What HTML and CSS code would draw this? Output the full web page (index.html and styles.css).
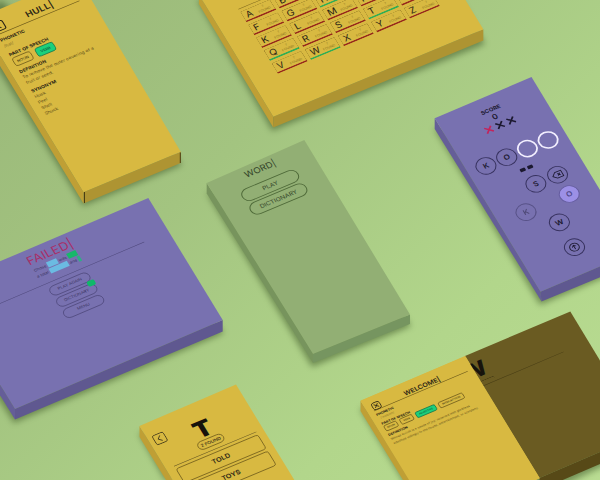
FILE: index.html
```html
<!DOCTYPE html>
<html lang="en">
<head>
<meta charset="utf-8">
<title>Word</title>
<link rel="stylesheet" href="styles.css">
</head>
<body>
<main class="board">
  <svg class="slabs" viewBox="0 0 600 480" aria-hidden="true">
    <g class="shadows">
      <path d="M-26 30 83 206 182 165 150 120 0 0Z"/>
      <path d="M197 0 272 131 485 44 460 0Z"/>
      <path d="M-10 386 14 423 224 333 190 290Z"/>
      <path d="M206 192 312 367 411 326 360 250Z"/>
      <path d="M434 128 540 305 640 262 540 150Z"/>
      <path d="M139 434 165 480 280 480 220 400Z"/>
      <path d="M360 409 405 484 545 494 620 458 560 360Z"/>
    </g>
    <g class="yellow">
      <path class="left" d="M-22.5 18.3V29L83.5 203.5V192.3Z"/>
      <path class="front" d="M83.5 192.3 180.7 151.7V163L83.5 203.5Z"/>
      <path class="top" d="M-22.5 18.3 74.7-22.3H78.5L180.7 151.7 83.5 192.3Z"/>
      <path class="seam" d="M84.5 192V203M180.3 152.5V163"/>
    </g>
    <g class="yellow">
      <path class="left" d="M198.9-5.4V4L273.3 127.5V116.7Z"/>
      <path class="front" d="M273.3 116.7 483.3 29.3V40.5L273.3 127.5Z"/>
      <path class="top" d="M198.9-5.4 409-92.8 483.3 29.3 273.3 116.7Z"/>
    </g>
    <g class="purple">
      <path class="left" d="M-60 287V298L15 419.5V409Z"/>
      <path class="front" d="M15 409 222.7 320V331.5L15 419.5Z"/>
      <path class="top" d="M-60 287 148.3 198 222.7 320 15 409Z"/>
    </g>
    <g class="green">
      <path class="left" d="M206.7 183V193.5L313 363V354Z"/>
      <path class="front" d="M313 354 410 314.5V324L313 363Z"/>
      <path class="top" d="M206.7 183 304.3 140 410 314.5 313 354Z"/>
    </g>
    <g class="purple">
      <path class="left" d="M434.7 118.3V129L541.5 301.5 540.5 291.7Z"/>
      <path class="front" d="M540.5 291.7 637 251V262L541.5 301.5Z"/>
      <path class="top" d="M434.7 118.3 531.5 77 637 251 540.5 291.7Z"/>
    </g>
    <g class="yellow">
      <path class="left" d="M139.5 426V437L246 610V600Z"/>
      <path class="top" d="M139.5 426 236 384.5 342 558 246 600Z"/>
    </g>
    <g class="yellow">
      <path class="left" d="M360.5 400.7V411L435.7 533V522Z"/>
      <path class="top" d="M360.5 400.7 465 356 540 478 435.7 522Z"/>
    </g>
    <g class="brown">
      <path class="front" d="M539.5 478 644 433V445L539.5 490Z"/>
      <path class="top" d="M465 356 570.3 311.5 644 433 539.5 478Z"/>
    </g>
  </svg>

  <section class="panel entry hull">
    <header class="bar">
      <svg class="key" viewBox="0 0 12 12"><rect x="1" y="1" width="10" height="10" rx="2"/><path d="M7.3 3.5 4.7 6l2.6 2.5"/></svg>
      <h1>HULL|</h1>
    </header>
    <h2>PHONETIC</h2>
    <p class="phonetic">/həl/</p>
    <h2>PART OF SPEECH</h2>
    <div class="tags"><span>NOUN</span><span class="on">VERB</span></div>
    <h2>DEFINITION</h2>
    <p>To remove the outer covering of a<br>fruit or seed.</p>
    <h2 class="syn">SYNONYM</h2>
    <p>Husk<br>Peel<br>Shell<br>Shuck</p>
  </section>

  <section class="panel wide letters">
    <div class="grid">
      <div class="cell">A<small>?<br>FOUND</small></div><div class="cell">B<small>?<br>FOUND</small></div><div class="cell"></div><div class="cell"></div><div class="cell"></div>
      <div class="cell">F<small>?<br>FOUND</small></div><div class="cell">G<small>?<br>FOUND</small></div><div class="cell got">H<small>?<br>FOUND</small></div><div class="cell"></div><div class="cell"></div>
      <div class="cell">K<small>?<br>FOUND</small></div><div class="cell">L<small>?<br>FOUND</small></div><div class="cell">M<small>?<br>FOUND</small></div><div class="cell">N<small>?<br>FOUND</small></div><div class="cell"></div>
      <div class="cell got">Q<small>?<br>FOUND</small></div><div class="cell">R<small>?<br>FOUND</small></div><div class="cell">S<small>?<br>FOUND</small></div><div class="cell got">T<small>?<br>FOUND</small></div><div class="cell">U<small>?<br>FOUND</small></div>
      <div class="cell">V<small>?<br>FOUND</small></div><div class="cell got">W<small>?<br>FOUND</small></div><div class="cell">X<small>?<br>FOUND</small></div><div class="cell">Y<small>?<br>FOUND</small></div><div class="cell">Z<small>?<br>FOUND</small></div>
    </div>
  </section>

  <section class="panel wide failed">
    <h1>FAILED|</h1>
    <p class="hint"><span>Chose</span><mark class="c1"></mark><span>was</span><mark class="g1"></mark></p>
    <p class="hint"><span>a total</span><mark class="c2"></mark><span>and</span><mark class="g2"></mark></p>
    <hr>
    <nav class="pills">
      <a>PLAY AGAIN</a>
      <a>DICTIONARY<i></i></a>
      <a>MENU</a>
    </nav>
  </section>

  <section class="panel home">
    <h1>WORD|</h1>
    <nav class="pills"><a>PLAY</a><a>DICTIONARY</a></nav>
  </section>

  <section class="panel game">
    <h2>SCORE</h2>
    <div class="score">0</div>
    <svg class="lives" viewBox="0 0 34 10"><path class="lost" d="M1.5 1.5l7 7m0-7l-7 7"/><path d="M13.5 1.5l7 7m0-7l-7 7M25.500 1.5l7 7m0-7l-7 7"/></svg>
    <div class="slots"><b>K</b><b>O</b><b class="open"></b><b class="open"></b></div>
    <div class="dashes"><i></i><i></i></div>
    <div class="ring">
      <span></span><b>S</b>
      <b><svg viewBox="0 0 12 12"><path d="M4.500 2.500H11v7H4.500L1 6ZM6.200 4.700l2.600 2.600m0-2.600L6.200 7.300"/></svg></b>
      <b class="used">K</b><span></span><b class="hit">O</b>
      <span></span><b>W</b><span></span>
    </div>
    <b class="send"><svg viewBox="0 0 12 12"><circle cx="6" cy="6" r="4.700"/><path d="M6 8.500v-5M4 5.500l2-2 2 2"/></svg></b>
  </section>

  <section class="panel list">
    <svg class="key" viewBox="0 0 12 12"><rect x=".6" y=".6" width="10.800" height="10.800" rx="2"/><path d="M7.300 3 4.300 6l3 3"/></svg>
    <div class="initial">T</div>
    <div class="count">2 FOUND</div>
    <hr>
    <ul><li>TOLD</li><li>TOYS</li></ul>
  </section>

  <section class="panel wide shade">
    <div class="initial">W</div>
    <div class="count"></div>
    <hr>
  </section>

  <section class="panel entry welcome">
    <header class="bar">
      <svg class="key" viewBox="0 0 12 12"><rect x="1" y="1" width="10" height="10" rx="3"/><path d="M3.500 3.500l5 5m0-5l-5 5"/></svg>
      <h1>WELCOME|</h1>
    </header>
    <h2>PHONETIC</h2>
    <p class="phonetic">/ˈwelkəm/</p>
    <h2>PART OF SPEECH</h2>
    <div class="tags"><span>NOUN</span><span>VERB</span><span class="on">ADJECTIVE</span><span>INTERJECTION</span></div>
    <h2>DEFINITION</h2>
    <p>Whose arrival is a cause of joy; received with gladness<br>admitted willingly to the house, entertainment, or company.</p>
  </section>
</main>
</body>
</html>
```
FILE: styles.css
```css
/* 1rem is one unit of a panel's own plane; the matrices scale it by a quarter. */
html { font-size: 4px; }
* { box-sizing: border-box; margin: 0; padding: 0; }
body { width: 600px; height: 480px; overflow: hidden; }
.board {
  position: relative;
  width: 600px;
  height: 480px;
  overflow: hidden;
  background: linear-gradient(135deg, #9ab879 0%, #a3c480 35%, #b2d68b 72%, #b9dc92 100%);
  font-family: Inter, "Open Sans", sans-serif;
  color: #2a2414;
}
.slabs { position: absolute; inset: 0; width: 600px; height: 480px; }
.shadows { fill: #3c5526; opacity: .55; filter: blur(3px); }
.yellow .top { fill: #d8b941; }
.yellow .left { fill: #bf9f35; }
.yellow .front { fill: #ae9432; }
.seam { stroke: #4a3d12; stroke-width: 1; fill: none; }
.purple .top { fill: #7871b0; }
.purple .left { fill: #655e98; }
.purple .front { fill: #5f5890; }
.green .top { fill: #92af74; }
.green .left { fill: #77945d; }
.green .front { fill: #769560; }
.brown .top { fill: #6a5b22; }
.brown .front { fill: #574917; }

.panel {
  position: absolute;
  left: 0;
  top: 0;
  width: 105.5rem;
  height: 228rem;
  transform-origin: 0 0;
}
.wide { width: 226rem; height: 160rem; }
.hull { transform: matrix(.23025, -.09625, .11625, .19075, -22.5, 18.3); }
.letters { transform: matrix(.23025, -.09625, .11625, .19075, 198.9, -5.4); }
.failed { transform: matrix(.2298, -.098, .11625, .19075, -60, 287); }
.home { transform: matrix(.23025, -.09725, .11625, .19075, 207.7, 183.2); }
.game { transform: matrix(.23025, -.09625, .11625, .19075, 435, 118.3); }
.list { transform: matrix(.23025, -.09625, .11625, .19075, 140, 425.7); }
.shade, .welcome { transform: matrix(.2298, -.0975, .11625, .19075, 360.7, 400.7); }

.key { display: block; fill: none; stroke: #2a2414; stroke-width: .8; }
hr { border: 0; border-top: .7rem solid; color: inherit; opacity: .7; }

/* dictionary entry */
.entry { padding: 0 8rem; }
.bar { display: grid; grid-template-columns: 13rem 1fr 2rem; align-items: center; height: 26.500rem; padding-top: 9rem; border-bottom: .8rem solid #6b5819; }
.bar .key { width: 13rem; height: 13rem; stroke-width: 1; }
.bar h1 { font-size: 9.500rem; line-height: 12rem; font-weight: 600; text-align: center; white-space: nowrap; letter-spacing: .2rem; }
.entry h2 { font-size: 5rem; line-height: 7rem; font-weight: 700; white-space: nowrap; }
.hull h2 { margin-top: 3.600rem; }
.entry p { font-size: 4.800rem; line-height: 7.300rem; color: #65521a; white-space: nowrap; }
.entry .phonetic { color: #8c752a; line-height: 8rem; }
.tags { display: flex; gap: 4.500rem; padding-top: .7rem; }
.tags span { width: 20rem; height: 11rem; border: .8rem solid #6b5819; border-radius: 3rem; font-size: 4rem; line-height: 9.500rem; font-weight: 500; text-align: center; color: #4c3f12; }
.tags .on { background: #1bd07c; border-color: #14714a; color: #0d5a3a; }
.hull .syn { margin-top: 4rem; }

.welcome { width: 114rem; height: 160rem; padding: 0 6rem; background: #d8b941; }
.welcome .bar { grid-template-columns: 10rem 1fr 3rem; height: 17rem; padding-top: 6rem; }
.welcome .key { width: 10rem; height: 10rem; z-index: 1; }
.welcome .key rect { fill: #d8b941; }
.welcome .bar h1 { font-size: 7rem; letter-spacing: 0; }
.welcome h2 { font-size: 3.600rem; line-height: 5rem; margin-top: 2.200rem; }
.welcome p { font-size: 3.300rem; line-height: 5.500rem; }
.welcome .phonetic { line-height: 4.500rem; padding-left: 2rem; }
.welcome .tags { gap: 3rem; padding-top: 0; }
.welcome .tags span { width: 14rem; height: 7.500rem; border-radius: 2rem; font-size: 2.700rem; line-height: 6rem; }
.welcome .tags span:nth-child(3) { width: 22rem; }
.welcome .tags span:nth-child(4) { width: 27rem; }

/* alphabet */
.letters { padding: 32.300rem 23rem 0 26.500rem; }
.grid { display: grid; grid-template-columns: repeat(5, 32.500rem); gap: 2.850rem 3.400rem; padding-top: 3rem; border-top: .7rem solid #7c661d; }
.cell { display: flex; justify-content: space-between; align-items: center; height: 14rem; padding: 0 3rem; border: .7rem solid #8a7222; border-bottom: 2.200rem solid #97281c; border-radius: 2rem 2rem 0 0; font-size: 10rem; line-height: 11rem; }
.got { border-bottom-color: #2fae55; }
.cell small { font-size: 3.600rem; line-height: 4.600rem; color: #937a24; text-align: center; }

/* pill menus */
.pills { display: flex; flex-direction: column; align-items: center; }
.pills a { position: relative; border: .8rem solid; border-radius: 9rem; text-align: center; }
.home { color: #34452a; }
.home h1 { font-size: 9.500rem; line-height: 14rem; padding-top: 1rem; font-weight: 400; text-align: center; }
.home .pills { gap: 2rem; padding-top: 7rem; }
.home .pills a { width: 61rem; height: 15.800rem; font-size: 6.500rem; line-height: 14rem; border-color: #4f6a39; border-width: 1rem; }

.failed { color: #38325f; padding-top: 4rem; }
.failed h1 { font-size: 13.200rem; line-height: 17rem; font-weight: 400; color: #a82f68; text-align: center; }
.hint { display: flex; justify-content: center; align-items: center; gap: 1.500rem; height: 7.500rem; font-size: 4.300rem; white-space: nowrap; }
.hint mark { height: 6.500rem; }
.c1 { width: 11rem; background: #6bbbe2; }
.c2 { width: 20rem; background: #6bbbe2; }
.g1 { width: 10rem; background: #17b86a; }
.g2 { width: 3rem; background: #2fae86; }
.failed hr { margin: 7.500rem 26rem 0; }
.failed .pills { gap: 2.800rem; padding-top: 4.500rem; }
.failed .pills a { left: .7rem; width: 43rem; height: 12rem; font-size: 4.400rem; line-height: 10.600rem; border-width: .6rem; }
.pills i { position: absolute; right: -2rem; top: -4rem; width: 8rem; height: 6.500rem; border-radius: 2rem; background: #10b86a; }

/* game */
.game { color: #1c1930; display: flex; flex-direction: column; align-items: center; padding-top: 11.500rem; }
.game h2 { font-size: 6rem; line-height: 8rem; font-weight: 700; }
.score { font-size: 8.500rem; line-height: 10rem; font-weight: 600; }
.lives { width: 34rem; height: 10rem; margin-top: 1rem; fill: none; stroke: #1c1930; stroke-width: 1.700; }
.lost { stroke: #c3245c; }
.game b { display: flex; align-items: center; justify-content: center; width: 20.500rem; height: 20.500rem; border: 1rem solid #37325f; border-radius: 50%; font-size: 8rem; font-weight: 600; }
.game b svg { width: 12rem; height: 12rem; fill: none; stroke: #1c1930; stroke-width: .9; }
.slots { display: flex; gap: 2rem; margin-top: 21.200rem; }
.game .open { border: 1.900rem solid #f3efff; }
.dashes { display: flex; gap: 2.500rem; margin-top: 8rem; }
.dashes i { width: 5.500rem; height: 4rem; border-radius: 1rem; background: #1c1930; }
.ring { display: grid; grid-template-columns: repeat(3, 20.500rem); gap: 4.800rem 2.900rem; margin-top: 8rem; }
.game .used { opacity: .5; }
.game .hit { background: #9c90e6; border-color: #655d9f; color: #4f4889; }
.game .send { margin-top: 12rem; }

/* word list */
.list { padding: 15.400rem 8rem 0; }
.list .key { width: 13rem; height: 13rem; margin-left: -4rem; stroke-width: .7; }
.initial { font-size: 26rem; line-height: 27.500rem; font-weight: 900; text-align: center; color: #17130c; }
.list .initial { margin-top: -12rem; }
.list .count { position: relative; width: 28rem; height: 10.500rem; margin: -1.500rem auto 0; border: .8rem solid #6b5819; border-radius: 6rem; font-size: 4.800rem; line-height: 9rem; font-weight: 500; text-align: center; background: #d8b941; }
.list hr { margin-top: 4rem; }
.list ul { list-style: none; display: grid; gap: 2.600rem; margin-top: 3rem; }
.list li { height: 19rem; border: .9rem solid #6b5819; border-radius: 3rem; font-size: 7.200rem; line-height: 17.200rem; font-weight: 600; text-align: center; }

.shade { width: 228rem; padding: 5rem 27rem 0; }
.shade .initial { font-size: 24rem; font-weight: 800; }
.shade .count { width: 28rem; height: 6rem; margin: 0 auto; border-top: .7rem solid #2f280c; border-radius: 4rem; }
.shade hr { border-color: #2f280c; }
```
